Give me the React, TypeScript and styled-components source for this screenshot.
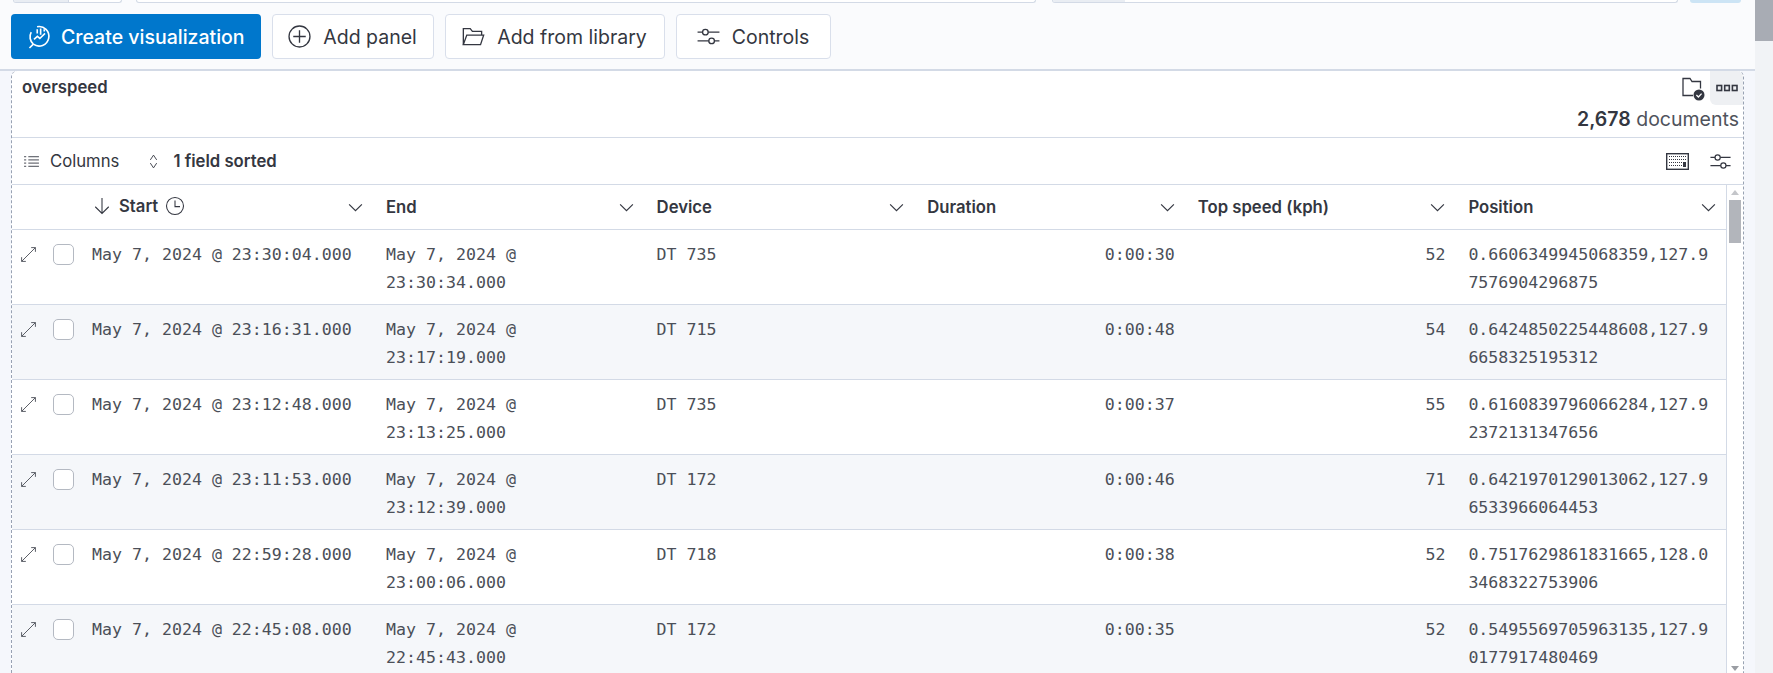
import React from 'react';
import styled, { createGlobalStyle } from 'styled-components';

const GlobalStyle = createGlobalStyle`
  html, body {
    margin: 0;
    padding: 0;
    height: 673px;
    overflow: hidden;
    background: #fafbfd;
    font-family: Inter, "Liberation Sans", sans-serif;
    color: #343741;
  }
  * { box-sizing: border-box; }
`;

interface Row {
  start: string;
  endDate: string;
  endTime: string;
  device: string;
  duration: string;
  speed: number;
  position: string;
}

const rows: Row[] = [
  { start: 'May 7, 2024 @ 23:30:04.000', endDate: 'May 7, 2024 @', endTime: '23:30:34.000', device: 'DT 735', duration: '0:00:30', speed: 52, position: '0.6606349945068359,127.97576904296875' },
  { start: 'May 7, 2024 @ 23:16:31.000', endDate: 'May 7, 2024 @', endTime: '23:17:19.000', device: 'DT 715', duration: '0:00:48', speed: 54, position: '0.6424850225448608,127.96658325195312' },
  { start: 'May 7, 2024 @ 23:12:48.000', endDate: 'May 7, 2024 @', endTime: '23:13:25.000', device: 'DT 735', duration: '0:00:37', speed: 55, position: '0.6160839796066284,127.92372131347656' },
  { start: 'May 7, 2024 @ 23:11:53.000', endDate: 'May 7, 2024 @', endTime: '23:12:39.000', device: 'DT 172', duration: '0:00:46', speed: 71, position: '0.6421970129013062,127.96533966064453' },
  { start: 'May 7, 2024 @ 22:59:28.000', endDate: 'May 7, 2024 @', endTime: '23:00:06.000', device: 'DT 718', duration: '0:00:38', speed: 52, position: '0.7517629861831665,128.03468322753906' },
  { start: 'May 7, 2024 @ 22:45:08.000', endDate: 'May 7, 2024 @', endTime: '22:45:43.000', device: 'DT 172', duration: '0:00:35', speed: 52, position: '0.5495569705963135,127.90177917480469' },
];

const headers = ['End', 'Device', 'Duration', 'Top speed (kph)', 'Position'];

const Icon = ({ size = 25, children }: { size?: number; children: React.ReactNode }) => (
  <svg width={size} height={size} viewBox="0 0 16 16" fill="none" stroke="currentColor" strokeWidth="0.85" style={{ flex: 'none' }}>
    {children}
  </svg>
);

const VisualizeIcon = () => (
  <Icon size={26}>
    <path d="M6.2 1.7A6 6 0 1 1 3.9 12.4 6 6 0 0 1 2.6 5" strokeWidth="1" />
    <path d="M3.9 12.4 1.5 14.8" strokeWidth="1" />
    <path d="M4.3 9.4 6.4 7.6l1.5 1.3 3.2-3.1" strokeWidth="1" />
    <path d="M6.3 3.2v2.6M8.4 2.8v3.8M10.6 3.2v1.4" strokeWidth="1" />
  </Icon>
);
const PlusCircleIcon = () => (
  <Icon>
    <circle cx="8" cy="8" r="6.7" />
    <path d="M8 4v8M4 8h8" />
  </Icon>
);
const FolderIcon = () => (
  <Icon>
    <path d="M1.5 13.2V3h4.4l1.4 1.7h5.9v2.4" />
    <path d="M1.5 13.2h11l2-6.1H3.7L1.5 13.2z" />
  </Icon>
);
const SlidersIcon = ({ size = 25 }: { size?: number }) => (
  <Icon size={size}>
    <path d="M1 5.2h3.2M7.8 5.2H15M1 10.8h7.2M11.8 10.8H15" />
    <circle cx="6" cy="5.2" r="1.8" />
    <circle cx="10" cy="10.8" r="1.8" />
  </Icon>
);
const ListIcon = () => (
  <Icon size={17}>
    <path d="M5 3.5h10M5 6.5h10M5 9.5h10M5 12.5h10M1 3.5h2M1 6.5h2M1 9.5h2M1 12.5h2" />
  </Icon>
);
const SortIcon = () => (
  <Icon size={17}>
    <path d="M5 6.5 8 2l3 4.5M5 9.5 8 14l3-4.5" />
  </Icon>
);
const ArrowDownIcon = () => (
  <Icon size={20}>
    <path d="M8 1.5v12.5M2.6 8.6 8 14l5.4-5.4" />
  </Icon>
);
const ClockIcon = () => (
  <Icon size={20}>
    <circle cx="8" cy="8" r="6.8" />
    <path d="M8 3.5V8.5h4" />
  </Icon>
);
const ChevronIcon = () => (
  <Icon size={17}>
    <path d="M2 5l6 6 6-6" strokeWidth="1.1" />
  </Icon>
);
const ExpandIcon = () => (
  <Icon size={17}>
    <path d="M1.5 14.5l13-13M10.5 1.5h4v4M1.5 10.5v4h4" />
  </Icon>
);
const KeyboardIcon = () => (
  <svg width="23" height="17" viewBox="0 0 23 17" fill="none" stroke="#343741" style={{ flex: 'none' }}>
    <rect x="0.7" y="0.7" width="21.6" height="15.6" strokeWidth="1.4" />
    <path d="M3 3.5h17M3 6.5h17M3 9.5h13" strokeDasharray="1 1" />
    <path d="M3 12.5h13" strokeDasharray="1 1" />
    <path d="M18.5 9v5" strokeWidth="3" />
  </svg>
);
const SavedFolderIcon = () => (
  <svg width="24" height="24" viewBox="0 0 24 24" fill="none" stroke="#343741" strokeWidth="1.3" style={{ flex: 'none' }}>
    <path d="M12 18.5H2V1.5h7l2 3h8.5v7" />
    <circle cx="18" cy="18" r="5.5" fill="#343741" stroke="none" />
    <path d="M15.4 18l2 2 3.2-3.4" stroke="#fff" strokeWidth="1.3" />
  </svg>
);
const BoxesIcon = () => (
  <svg width="22" height="8" viewBox="0 0 22 8" fill="none" stroke="#343741" strokeWidth="1.6">
    <rect x="1" y="1.5" width="4.6" height="5" />
    <rect x="8.7" y="1.5" width="4.6" height="5" />
    <rect x="16.4" y="1.5" width="4.6" height="5" />
  </svg>
);

export default function App() {
  return (
    <Page>
      <GlobalStyle />
      <Main>
        <TopStrip>
          <Pill $width={109}><PillShade $width={55} $divided /></Pill>
          <Pill $width={900} $gap={14} />
          <Pill $width={626} $gap={16}><PillShade $width={72} /></Pill>
          <BluePill />
        </TopStrip>
        <Toolbar>
          <PrimaryButton>
            <VisualizeIcon />
            Create visualization
          </PrimaryButton>
          <GhostButton $width={162}>
            <PlusCircleIcon />
            Add panel
          </GhostButton>
          <GhostButton $width={220}>
            <FolderIcon />
            Add from library
          </GhostButton>
          <GhostButton $width={155}>
            <SlidersIcon />
            Controls
          </GhostButton>
        </Toolbar>
        <Canvas>
          <Panel>
            <PanelTitleRow>
              <PanelTitle>overspeed</PanelTitle>
              <PanelActions>
                <SavedFolderIcon />
                <MoreButton>
                  <BoxesIcon />
                </MoreButton>
              </PanelActions>
            </PanelTitleRow>
            <DocCountRow>
              <strong>2,678</strong>&nbsp;documents
            </DocCountRow>
            <GridToolbar>
              <ToolbarLink>
                <ListIcon />
                Columns
              </ToolbarLink>
              <ToolbarLink $bold>
                <SortIcon />
                1 field sorted
              </ToolbarLink>
              <ToolbarEnd>
                <KeyboardIcon />
                <SlidersIcon size={23} />
              </ToolbarEnd>
            </GridToolbar>
            <GridArea>
              <DataGrid>
                <HeaderRow>
                  <span />
                  <HeaderCell>
                    <StartLabel>
                      <ArrowDownIcon />
                      <span>Start</span>
                      <ClockIcon />
                    </StartLabel>
                    <ChevronIcon />
                  </HeaderCell>
                  {headers.map((h) => (
                    <HeaderCell key={h} $last={h === 'Position'}>
                      {h}
                      <ChevronIcon />
                    </HeaderCell>
                  ))}
                </HeaderRow>
                {rows.map((row, i) => (
                  <DataRow key={row.start} $striped={i % 2 === 1}>
                    <ControlCell>
                      <ExpandIcon />
                      <Checkbox />
                    </ControlCell>
                    <Cell>{row.start}</Cell>
                    <Cell>
                      {row.endDate}
                      <br />
                      {row.endTime}
                    </Cell>
                    <Cell>{row.device}</Cell>
                    <Cell $right>{row.duration}</Cell>
                    <Cell $right>{row.speed}</Cell>
                    <Cell $break>{row.position}</Cell>
                  </DataRow>
                ))}
              </DataGrid>
              <InnerScrollbar>
                <ArrowUp />
                <InnerThumb />
                <ArrowDown />
              </InnerScrollbar>
            </GridArea>
          </Panel>
        </Canvas>
      </Main>
      <PageScrollbar>
        <PageThumb />
      </PageScrollbar>
    </Page>
  );
}

const Page = styled.div`
  display: flex;
  width: 1773px;
  height: 673px;
  overflow: hidden;
`;

const Main = styled.div`
  flex: 1;
  min-width: 0;
  display: flex;
  flex-direction: column;
`;

const TopStrip = styled.div`
  height: 3px;
  flex: none;
  display: flex;
  padding-left: 13px;
  overflow: hidden;
`;

const Pill = styled.div<{ $width: number; $gap?: number }>`
  display: flex;
  width: ${({ $width }) => $width}px;
  margin-left: ${({ $gap }) => $gap || 0}px;
  height: 3px;
  background: #fff;
  border: 1px solid #d3dae6;
  border-top: none;
  border-radius: 0 0 8px 8px;
  overflow: hidden;
`;

const PillShade = styled.div<{ $width: number; $divided?: boolean }>`
  width: ${({ $width }) => $width}px;
  background: #e9edf3;
  ${({ $divided }) => ($divided ? 'border-right: 1px solid #d3dae6;' : '')}
`;

const BluePill = styled.div`
  width: 51px;
  height: 3px;
  margin-left: 12px;
  background: #cce4f5;
  border-radius: 0 0 8px 8px;
`;

const Toolbar = styled.div`
  height: 68px;
  flex: none;
  display: flex;
  align-items: flex-start;
  gap: 11px;
  padding: 11px 0 0 11px;
  background: #fafbfd;
  border-bottom: 2px solid #d3dae6;
`;

const PrimaryButton = styled.button`
  display: flex;
  align-items: center;
  gap: 8px;
  width: 250px;
  height: 45px;
  padding: 0 0 0 16px;
  border: none;
  border-radius: 4px;
  background: #0077cc;
  color: #fff;
  font: 500 19.5px Inter, "Liberation Sans", sans-serif;
  white-space: nowrap;
`;

const GhostButton = styled.button<{ $width: number }>`
  display: flex;
  align-items: center;
  justify-content: center;
  gap: 11px;
  width: ${({ $width }) => $width}px;
  height: 45px;
  padding: 0 2px 0 0;
  border: 1px solid #d9dfeb;
  border-radius: 4px;
  background: #fff;
  color: #343741;
  font: 400 19.5px Inter, "Liberation Sans", sans-serif;
  white-space: nowrap;
`;

const Canvas = styled.div`
  flex: 1;
  min-height: 0;
  padding: 0 11px;
  background: #f5f7fc;
`;

const Panel = styled.div`
  height: 100%;
  display: flex;
  flex-direction: column;
  background: #fff;
  border-left: 1px dashed #98a2b3;
  border-right: 1px dashed #98a2b3;
  border-radius: 6px 6px 0 0;
  overflow: hidden;
`;

const PanelTitleRow = styled.div`
  height: 34px;
  flex: none;
  display: flex;
  justify-content: space-between;
  padding-left: 10px;
`;

const PanelTitle = styled.div`
  padding-top: 6px;
  font-size: 16.7px;
  line-height: 20px;
  font-weight: 600;
`;

const PanelActions = styled.div`
  display: flex;
  align-items: flex-start;
  gap: 5px;
  padding-top: 6px;
`;

const MoreButton = styled.div`
  display: flex;
  align-items: center;
  justify-content: center;
  width: 33px;
  height: 34px;
  margin-top: -6px;
  background: #eef0f3;
  border-radius: 0 6px 0 6px;
`;

const DocCountRow = styled.div`
  height: 33px;
  flex: none;
  display: flex;
  justify-content: flex-end;
  align-items: flex-start;
  padding: 2px 4px 0 0;
  font-size: 19.5px;
  line-height: 24px;
  color: #4f535c;
  border-bottom: 1px solid #d3dae6;
  strong { font-weight: 600; color: #343741; }
`;

const GridToolbar = styled.div`
  height: 47px;
  flex: none;
  display: flex;
  align-items: center;
  gap: 26px;
  padding: 0 11px 0 11px;
  border-bottom: 1px solid #d3dae6;
`;

const ToolbarLink = styled.div<{ $bold?: boolean }>`
  display: flex;
  align-items: center;
  gap: ${({ $bold }) => ($bold ? 11 : 10)}px;
  font-size: 16.7px;
  font-weight: ${({ $bold }) => ($bold ? 600 : 400)};
  color: #343741;
`;

const ToolbarEnd = styled.div`
  margin-left: auto;
  display: flex;
  align-items: center;
  gap: 20px;
`;

const GridArea = styled.div`
  flex: 1;
  min-height: 0;
  display: flex;
`;

const DataGrid = styled.div`
  flex: 1;
  min-width: 0;
  border-right: 1px solid #d3dae6;
`;

const columns = '72px 294px 270.6px 270.6px 270.6px 270.6px 1fr';

const HeaderRow = styled.div`
  display: grid;
  grid-template-columns: ${columns};
  height: 45px;
  border-bottom: 1px solid #d3dae6;
`;

const HeaderCell = styled.div<{ $last?: boolean }>`
  display: flex;
  align-items: center;
  justify-content: space-between;
  padding: 0 ${({ $last }) => ($last ? 9 : 14)}px 0 8px;
  font-size: 16.7px;
  font-weight: 600;
  color: #343741;
`;

const StartLabel = styled.div`
  display: flex;
  align-items: center;
  gap: 7px;
  margin-top: -2px;
`;

const DataRow = styled.div<{ $striped: boolean }>`
  display: grid;
  grid-template-columns: ${columns};
  height: 75.1px;
  background: ${({ $striped }) => ($striped ? '#f5f7fa' : '#fff')};
  border-bottom: 1px solid #d3dae6;
`;

const ControlCell = styled.div`
  display: flex;
  align-items: flex-start;
  gap: 16px;
  padding: 15px 0 0 8px;
  color: #4b4f58;
  svg { margin-top: 1px; }
`;

const Checkbox = styled.div`
  width: 21px;
  height: 21px;
  margin-top: -1px;
  background: #fff;
  border: 1px solid #b4b9c2;
  border-radius: 5px;
`;

const Cell = styled.div<{ $right?: boolean; $break?: boolean }>`
  padding: 11px 8px 0 8px;
  font-family: "DejaVu Sans Mono", "Liberation Mono", monospace;
  font-size: 16.6px;
  line-height: 28px;
  color: #4b4f58;
  text-align: ${({ $right }) => ($right ? 'right' : 'left')};
  word-break: ${({ $break }) => ($break ? 'break-all' : 'normal')};
  ${({ $right }) => ($right ? 'padding-right: 15px;' : '')}
  overflow: hidden;
`;

const InnerScrollbar = styled.div`
  position: relative;
  width: 16px;
  flex: none;
  background: #fff;
`;

const InnerThumb = styled.div`
  position: absolute;
  top: 15px;
  left: 2px;
  width: 12px;
  height: 43px;
  background: #b2b5bb;
`;

const ArrowUp = styled.div`
  position: absolute;
  top: 5px;
  left: 4px;
  border: 4px solid transparent;
  border-top: none;
  border-bottom: 5px solid #c4c6ca;
`;

const ArrowDown = styled.div`
  position: absolute;
  bottom: 2px;
  left: 4px;
  border: 4px solid transparent;
  border-bottom: none;
  border-top: 5px solid #9a9da3;
`;

const PageScrollbar = styled.div`
  width: 18px;
  flex: none;
  background: #f1f3f6;
`;

const PageThumb = styled.div`
  height: 41px;
  background: #a8acb4;
`;
